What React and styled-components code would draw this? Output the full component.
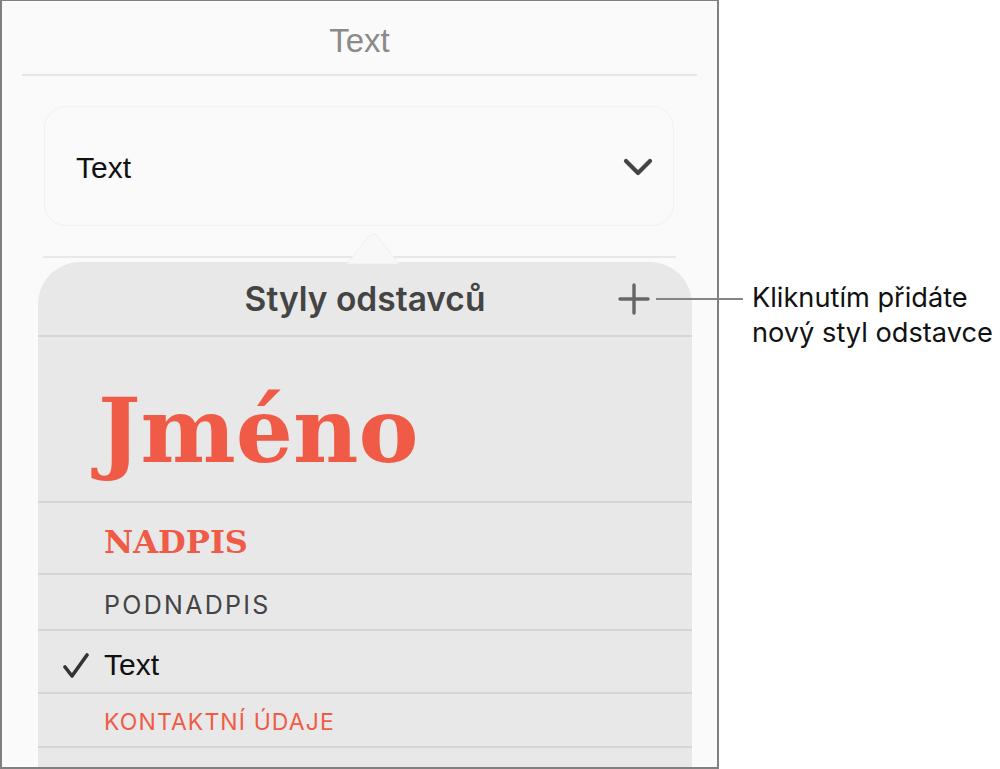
import React from "react";
import styled, { createGlobalStyle } from "styled-components";

const GlobalStyle = createGlobalStyle`
  html, body {
    margin: 0;
    padding: 0;
    background: #ffffff;
  }
  body {
    font-family: Inter, "Liberation Sans", sans-serif;
  }
`;

const red = "#f05b47";
const helvetica = `"Liberation Sans", Arial, sans-serif`;
const serif = `"DejaVu Serif", "Liberation Serif", serif`;

const Page = styled.div`
  position: relative;
  width: 1000px;
  height: 769px;
  display: flex;
  background: #ffffff;
  overflow: hidden;
`;

const Device = styled.div`
  box-sizing: border-box;
  width: 719px;
  height: 769px;
  border: 2px solid #808080;
  border-top-width: 1px;
  background: #fafafa;
  overflow: hidden;
  display: flex;
  flex-direction: column;
`;

const TitleBar = styled.div`
  margin: 0 20px;
  height: 75px;
  border-bottom: 2px solid #e6e6e6;
  display: flex;
  align-items: center;
  justify-content: center;
  padding-top: 7px;
  box-sizing: border-box;
  font-family: ${helvetica};
  font-size: 33px;
  color: #8a8a8a;
`;

const StyleCard = styled.div`
  margin: 30px 43px 0 42px;
  height: 120px;
  box-sizing: border-box;
  border: 1px solid #f1f1f1;
  border-radius: 22px;
  background: #fafafa;
  display: flex;
  align-items: center;
  justify-content: space-between;
  padding: 4px 20px 0 31px;
  font-family: ${helvetica};
  font-size: 30px;
  color: #111111;
`;

const Divider = styled.div`
  margin: 30px 41px 0 41px;
  height: 2px;
  background: #e8e8e8;
`;

const Popover = styled.div`
  position: relative;
  margin: 4px 25px 0 36px;
  flex: 1;
  background: #e8e8e8;
  border-radius: 42px 42px 0 0;
`;

const Arrow = styled.svg`
  position: absolute;
  top: -30px;
  left: 305px;
`;

const Header = styled.div`
  position: relative;
  height: 75px;
  border-bottom: 2px solid #d5d5d5;
  display: flex;
  align-items: center;
  justify-content: center;
  padding-top: 1px;
  box-sizing: border-box;
  font-size: 33.5px;
  font-weight: 600;
  color: #444444;
`;

const AddButton = styled.svg`
  position: absolute;
  right: 42px;
  top: 21px;
`;

const Row = styled.div`
  height: ${p => p.$h}px;
  border-bottom: 2px solid #d5d5d5;
  display: flex;
  align-items: center;
  padding: ${p => p.$pad || "0"} 0 0 66px;
  box-sizing: border-box;
  position: relative;
`;

const Check = styled.svg`
  position: absolute;
  left: 24px;
  top: 22px;
`;

const NameStyle = styled.span`
  font-family: ${serif};
  font-weight: bold;
  font-size: 90px;
  color: ${red};
  margin-left: -6px;
`;

const HeadingStyle = styled.span`
  font-family: ${serif};
  font-weight: bold;
  font-size: 32px;
  color: ${red};
`;

const CapsStyle = styled.span`
  font-size: ${p => p.$size}px;
  letter-spacing: ${p => p.$spacing}px;
  color: ${p => p.$color};
`;

const BodyStyle = styled.span`
  font-family: ${helvetica};
  font-size: 30px;
  color: #111111;
`;

const Callout = styled.div`
  position: absolute;
  left: 656px;
  top: 280px;
  display: flex;
  align-items: flex-start;
`;

const Leader = styled.div`
  width: 87px;
  height: 2px;
  margin-top: 18px;
  background: #858585;
`;

const CalloutText = styled.div`
  margin-left: 9px;
  font-size: 27.2px;
  line-height: 35px;
  color: #111111;
`;

const Chevron = () => (
  <svg width="30" height="20" viewBox="0 0 30 20">
    <path d="M3 3 L15 15 L27 3" fill="none" stroke="#444" strokeWidth="4.2" strokeLinecap="round" strokeLinejoin="round" />
  </svg>
);

export default function App() {
  return (
    <>
      <GlobalStyle />
      <Page>
        <Device>
          <TitleBar>Text</TitleBar>
          <StyleCard>
            <span>Text</span>
            <Chevron />
          </StyleCard>
          <Divider />
          <Popover>
            <Arrow width="60" height="32" viewBox="0 0 60 32">
              <path d="M4 32 L25 5 Q30 -1 35 5 L56 32 Z" fill="#f8f8f8" stroke="#efefef" strokeWidth="1" />
            </Arrow>
            <Header>
              Styly odstavců
              <AddButton width="32" height="32" viewBox="0 0 32 32">
                <path d="M16 2 V30 M2 16 H30" stroke="#666" strokeWidth="3.4" strokeLinecap="round" />
              </AddButton>
            </Header>
            <Row $h={166} $pad="22px">
              <NameStyle>Jméno</NameStyle>
            </Row>
            <Row $h={72} $pad="8px">
              <HeadingStyle>NADPIS</HeadingStyle>
            </Row>
            <Row $h={56} $pad="6px">
              <CapsStyle $size={25} $spacing={2.3} $color="#444444">PODNADPIS</CapsStyle>
            </Row>
            <Row $h={63} $pad="6px">
              <Check width="28" height="26" viewBox="0 0 28 26">
                <path d="M3 14 L10 23 L25 2" fill="none" stroke="#333" strokeWidth="3.6" strokeLinecap="round" strokeLinejoin="round" />
              </Check>
              <BodyStyle>Text</BodyStyle>
            </Row>
            <Row $h={54} $pad="4px">
              <CapsStyle $size={23} $spacing={1.1} $color={red}>KONTAKTNÍ ÚDAJE</CapsStyle>
            </Row>
          </Popover>
        </Device>
        <Callout>
          <Leader />
          <CalloutText>
            Kliknutím přidáte
            <br />
            nový styl odstavce
          </CalloutText>
        </Callout>
      </Page>
    </>
  );
}
